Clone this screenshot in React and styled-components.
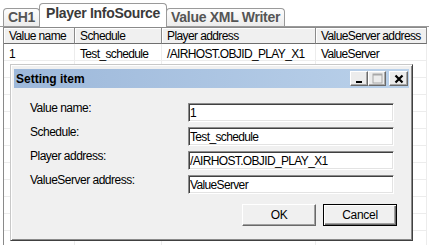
import React from "react";
import styled, { createGlobalStyle, css } from "styled-components";

const GlobalStyle = createGlobalStyle`
  html, body {
    margin: 0;
    padding: 0;
    background: #fff;
  }
  body {
    font-family: "Liberation Sans", Arial, sans-serif;
  }
`;

const columns = [
  { title: "Value name", width: 71 },
  { title: "Schedule", width: 87 },
  { title: "Player address", width: 154 },
  { title: "ValueServer address", width: 111 },
];

const rows = [["1", "Test_schedule", "/AIRHOST.OBJID_PLAY_X1", "ValueServer"]];

const fields = [
  { label: "Value name:", value: "1" },
  { label: "Schedule:", value: "Test_schedule" },
  { label: "Player address:", value: "/AIRHOST.OBJID_PLAY_X1" },
  { label: "ValueServer address:", value: "ValueServer" },
];

const App = () => {
  const emptyRows = Array.from({ length: 11 }, () => ["", "", "", ""]);

  return (
    <>
      <GlobalStyle />
      <Screen>
        <TabStrip>
          <Tab>CH1</Tab>
          <Tab active>Player InfoSource</Tab>
          <Tab>Value XML Writer</Tab>
        </TabStrip>

        <ListView>
          <Row>
            {columns.map((c) => (
              <HeaderCell key={c.title} w={c.width}>
                {c.title}
              </HeaderCell>
            ))}
          </Row>
          {[...rows, ...emptyRows].map((r, i) => (
            <Row key={i}>
              {r.map((v, j) => (
                <Cell key={j} w={columns[j].width}>
                  {v}
                </Cell>
              ))}
            </Row>
          ))}
        </ListView>

        <Dialog>
          <TitleBar>
            <Title>Setting item</Title>
            <TitleButtons>
              <TitleButton>
                <svg width="8" height="10" viewBox="0 0 8 10">
                  <rect x="1" y="7" width="6" height="2" fill="#000" />
                </svg>
              </TitleButton>
              <TitleButton>
                <svg width="11" height="11" viewBox="0 0 11 11">
                  <rect x="1" y="1" width="9" height="9" fill="none" stroke="#a8a8a8" strokeWidth="1" />
                  <rect x="1" y="1" width="9" height="1.5" fill="#a8a8a8" />
                </svg>
              </TitleButton>
              <TitleButton close>
                <svg width="10" height="10" viewBox="0 0 10 10">
                  <path d="M1.5 1.5 L8.5 8.5 M8.5 1.5 L1.5 8.5" stroke="#000" strokeWidth="2.2" />
                </svg>
              </TitleButton>
            </TitleButtons>
          </TitleBar>

          <DialogBody>
            <Form>
              {fields.map((f) => (
                <React.Fragment key={f.label}>
                  <Label>{f.label}</Label>
                  <Field readOnly value={f.value} />
                </React.Fragment>
              ))}
            </Form>
            <ButtonRow>
              <Button>OK</Button>
              <Button primary>Cancel</Button>
            </ButtonRow>
          </DialogBody>
        </Dialog>
      </Screen>
    </>
  );
};

export default App;

const Screen = styled.div`
  position: relative;
  width: 429px;
  height: 245px;
  overflow: hidden;
  background: #fff;
`;

const TabStrip = styled.div`
  box-sizing: border-box;
  display: flex;
  align-items: flex-end;
  height: 27px;
  padding-left: 3px;
  border-bottom: 1px solid #9a9a9a;
`;

const Tab = styled.div`
  box-sizing: border-box;
  height: 18px;
  padding: 0 4px;
  margin-right: -1px;
  border: 1px solid #9a9a9a;
  border-bottom: none;
  border-radius: 4px 4px 0 0;
  background: linear-gradient(#fdfdfd, #ececec);
  color: #555;
  font-size: 14px;
  font-weight: bold;
  letter-spacing: -0.3px;
  line-height: 16px;
  white-space: nowrap;

  ${(p) =>
    p.active &&
    css`
      position: relative;
      z-index: 1;
      height: 24px;
      margin-bottom: -1px;
      padding: 1px 6px 0;
      background: #fff;
      color: #3a3a3a;
    `}
`;

const ListView = styled.div`
  margin-left: 3px;
  width: 424px;
  border-left: 1px solid #8a8a8a;
  display: flex;
  flex-direction: column;
`;

const Row = styled.div`
  display: flex;
`;

const HeaderCell = styled.div`
  box-sizing: border-box;
  width: ${(p) => p.w}px;
  height: 17px;
  padding: 1px 0 0 5px;
  border-top: 1px solid #8a8a8a;
  border-right: 1px solid #8a8a8a;
  border-bottom: 1px solid #6f6f6f;
  background: #f0f0f0;
  box-shadow: inset 1px 1px 0 #fff;
  font-size: 12px;
  letter-spacing: -0.6px;
  line-height: 14px;
  color: #000;
  white-space: nowrap;
`;

const Cell = styled.div`
  box-sizing: border-box;
  width: ${(p) => p.w}px;
  height: 17px;
  padding: 3px 0 0 5px;
  border-right: 1px solid #ececec;
  border-bottom: 1px solid #ececec;
  font-size: 12px;
  letter-spacing: -0.65px;
  line-height: 14px;
  color: #000;
  white-space: nowrap;
`;

const Dialog = styled.div`
  position: absolute;
  left: 10px;
  top: 64px;
  box-sizing: border-box;
  width: 403px;
  height: 177px;
  display: flex;
  flex-direction: column;
  padding: 4px 3px 3px 3px;
  background: #f0f0f0;
  border: 1px solid;
  border-color: #c8c8c8 #404040 #404040 #c8c8c8;
  box-shadow: inset 1px 1px 0 #fff, inset -1px -1px 0 #8a8a8a;
`;

const TitleBar = styled.div`
  display: flex;
  align-items: center;
  justify-content: space-between;
  height: 19px;
  padding: 0 1px 0 2px;
  background: linear-gradient(90deg, #9db8da, #bad1ea);
`;

const Title = styled.div`
  font-size: 12px;
  font-weight: bold;
  color: #000;
`;

const TitleButtons = styled.div`
  display: flex;
`;

const TitleButton = styled.div`
  box-sizing: border-box;
  width: 18px;
  height: 15px;
  display: flex;
  align-items: center;
  justify-content: center;
  background: #ececec;
  border: 1px solid;
  border-color: #fff #6a6a6a #6a6a6a #fff;
  box-shadow: inset -1px -1px 0 #a8a8a8;

  ${(p) =>
    p.close &&
    css`
      width: 19px;
      margin-left: 3px;
    `}
`;

const DialogBody = styled.div`
  flex: 1;
  padding: 15px 12px 0 16px;
  display: flex;
  flex-direction: column;
`;

const Form = styled.div`
  display: grid;
  grid-template-columns: 158px 206px;
  grid-auto-rows: 19px;
  row-gap: 5px;
`;

const Label = styled.div`
  margin-top: -2px;
  font-size: 12px;
  letter-spacing: -0.5px;
  line-height: 14px;
  color: #000;
`;

const Field = styled.input`
  box-sizing: border-box;
  width: 206px;
  height: 19px;
  margin: 0;
  padding: 0 1px;
  background: #fff;
  border: 1px solid;
  border-color: #8c8c8c #fff #fff #8c8c8c;
  box-shadow: inset 1px 1px 0 #404040, inset -1px -1px 0 #e3e3e3;
  font-family: "Liberation Sans", Arial, sans-serif;
  font-size: 12px;
  letter-spacing: -0.65px;
  color: #000;
  outline: none;
`;

const ButtonRow = styled.div`
  display: flex;
  justify-content: flex-end;
  gap: 7px;
  margin-top: 10px;
`;

const Button = styled.button`
  box-sizing: border-box;
  width: 74px;
  height: 22px;
  padding: 0;
  background: #f0f0f0;
  border: 1px solid;
  border-color: #fff #696969 #696969 #fff;
  box-shadow: inset -1px -1px 0 #a0a0a0;
  font-family: "Liberation Sans", Arial, sans-serif;
  font-size: 12px;
  letter-spacing: -0.3px;
  color: #000;

  ${(p) =>
    p.primary &&
    css`
      border-color: #000;
      box-shadow: inset 1px 1px 0 #fff, inset -1px -1px 0 #696969,
        inset -2px -2px 0 #a0a0a0;
    `}
`;
